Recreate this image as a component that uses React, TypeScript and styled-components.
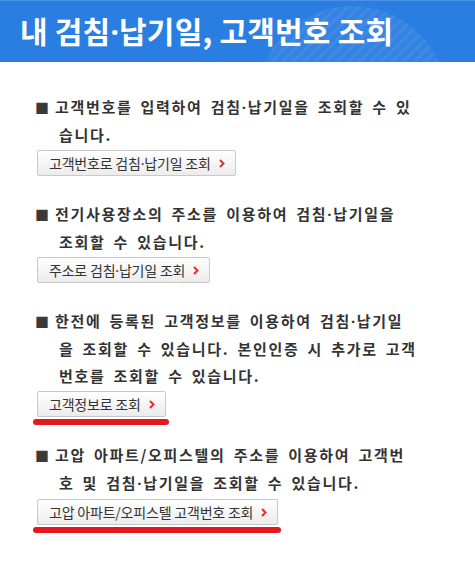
import styled, { createGlobalStyle } from 'styled-components';

type Item = {
  lines: string[];
  button: string;
  marked?: boolean;
};

const items: Item[] = [
  {
    lines: ['고객번호를 입력하여 검침·납기일을 조회할 수 있', '습니다.'],
    button: '고객번호로 검침·납기일 조회',
  },
  {
    lines: ['전기사용장소의 주소를 이용하여 검침·납기일을', '조회할 수 있습니다.'],
    button: '주소로 검침·납기일 조회',
  },
  {
    lines: [
      '한전에 등록된 고객정보를 이용하여 검침·납기일',
      '을 조회할 수 있습니다. 본인인증 시 추가로 고객',
      '번호를 조회할 수 있습니다.',
    ],
    button: '고객정보로 조회',
    marked: true,
  },
  {
    lines: ['고압 아파트/오피스텔의 주소를 이용하여 고객번', '호 및 검침·납기일을 조회할 수 있습니다.'],
    button: '고압 아파트/오피스텔 고객번호 조회',
    marked: true,
  },
];

// the CJK font draws "·" full width; give it the narrow latin one
const withDots = (text: string) =>
  text.split('·').map((part, i) => (
    <span key={i}>
      {i > 0 && <S.Dot>·</S.Dot>}
      {part}
    </span>
  ));

const Chevron = () => (
  <svg width="6" height="9" viewBox="0 0 6 9">
    <polyline points="1,1 4.5,4.5 1,8" fill="none" stroke="#e2302c" strokeWidth="2" />
  </svg>
);

const App = () => {
  return (
    <>
      <GlobalStyle />
      <S.Page>
        <S.Header>
          <S.Deco width="475" height="62" viewBox="0 0 475 62">
            <defs>
              <clipPath id="deco-circle">
                <circle cx="352" cy="101" r="96" />
              </clipPath>
            </defs>
            <circle cx="352" cy="101" r="96" fill="rgba(255,255,255,0.05)" />
            <g clipPath="url(#deco-circle)" stroke="rgba(255,255,255,0.06)" strokeWidth="3">
              {Array.from({ length: 22 }).map((_, i) => (
                <line key={i} x1={240 + i * 11} y1={70} x2={310 + i * 11} y2={0} />
              ))}
            </g>
          </S.Deco>
          <S.Title>{withDots('내 검침·납기일, 고객번호 조회')}</S.Title>
        </S.Header>
        <S.Content>
          {items.map((item, index) => (
            <S.Section key={index}>
              <S.Desc>
                <S.Bullet>■</S.Bullet>
                {item.lines.map((line, i) => (
                  <span key={i}>
                    {withDots(line)}
                    {i < item.lines.length - 1 && <br />}
                  </span>
                ))}
              </S.Desc>
              <S.ButtonWrap $marked={item.marked}>
                <S.Button type="button">
                  <span>{withDots(item.button)}</span>
                  <Chevron />
                </S.Button>
              </S.ButtonWrap>
            </S.Section>
          ))}
        </S.Content>
      </S.Page>
    </>
  );
};

const GlobalStyle = createGlobalStyle`
  html, body {
    margin: 0;
    padding: 0;
    background: #ffffff;
  }
  body {
    font-family: "Noto Sans CJK KR", "Noto Sans", sans-serif;
  }
`;

const S = {
  Page: styled.div`
    width: 475px;
    min-height: 562px;
    background: #ffffff;
  `,
  Header: styled.header`
    position: relative;
    height: 62px;
    background: #2a7de1;
    border-top: 1px solid #4a92e8;
    box-sizing: border-box;
    overflow: hidden;
  `,
  Deco: styled.svg`
    position: absolute;
    top: 0;
    left: 0;
  `,
  Title: styled.h1`
    position: relative;
    margin: 0;
    padding-left: 20px;
    font-family: "Noto Sans CJK KR", sans-serif;
    font-size: 30px;
    font-weight: 700;
    line-height: 59px;
    color: #ffffff;
    letter-spacing: 0.2px;
  `,
  Dot: styled.span`
    font-family: "Noto Sans", sans-serif;
  `,
  Content: styled.main`
    padding: 31px 0 0 35px;
  `,
  Section: styled.section`
    margin-bottom: 24px;
  `,
  Desc: styled.p`
    margin: 0 0 2px;
    padding-left: 24px;
    text-indent: -24px;
    font-family: "Noto Sans CJK KR", sans-serif;
    font-size: 15px;
    font-weight: 700;
    line-height: 27px;
    letter-spacing: 1.7px;
    word-spacing: 3px;
    color: #333333;
    white-space: nowrap;
  `,
  Bullet: styled.span`
    margin-right: 6px;
    font-size: 14px;
    letter-spacing: 0;
    color: #3a3a3a;
  `,
  ButtonWrap: styled.div<{ $marked?: boolean }>`
    position: relative;
    display: inline-block;
    margin-left: 2px;

    &::after {
      content: '';
      display: ${({ $marked }) => ($marked ? 'block' : 'none')};
      position: absolute;
      left: -4px;
      right: -3px;
      bottom: -8px;
      height: 6px;
      border-radius: 3px;
      background: #e3191f;
    }
  `,
  Button: styled.button`
    display: flex;
    align-items: center;
    gap: 8px;
    height: 26px;
    padding: 0 10px 0 11px;
    border: 1px solid #c9c9c9;
    border-radius: 2px;
    background: linear-gradient(#ffffff, #ececec);
    font-family: "Noto Sans CJK KR", sans-serif;
    font-size: 14px;
    font-weight: 400;
    letter-spacing: -0.2px;
    color: #333333;
    cursor: pointer;
  `,
};

export default App;
